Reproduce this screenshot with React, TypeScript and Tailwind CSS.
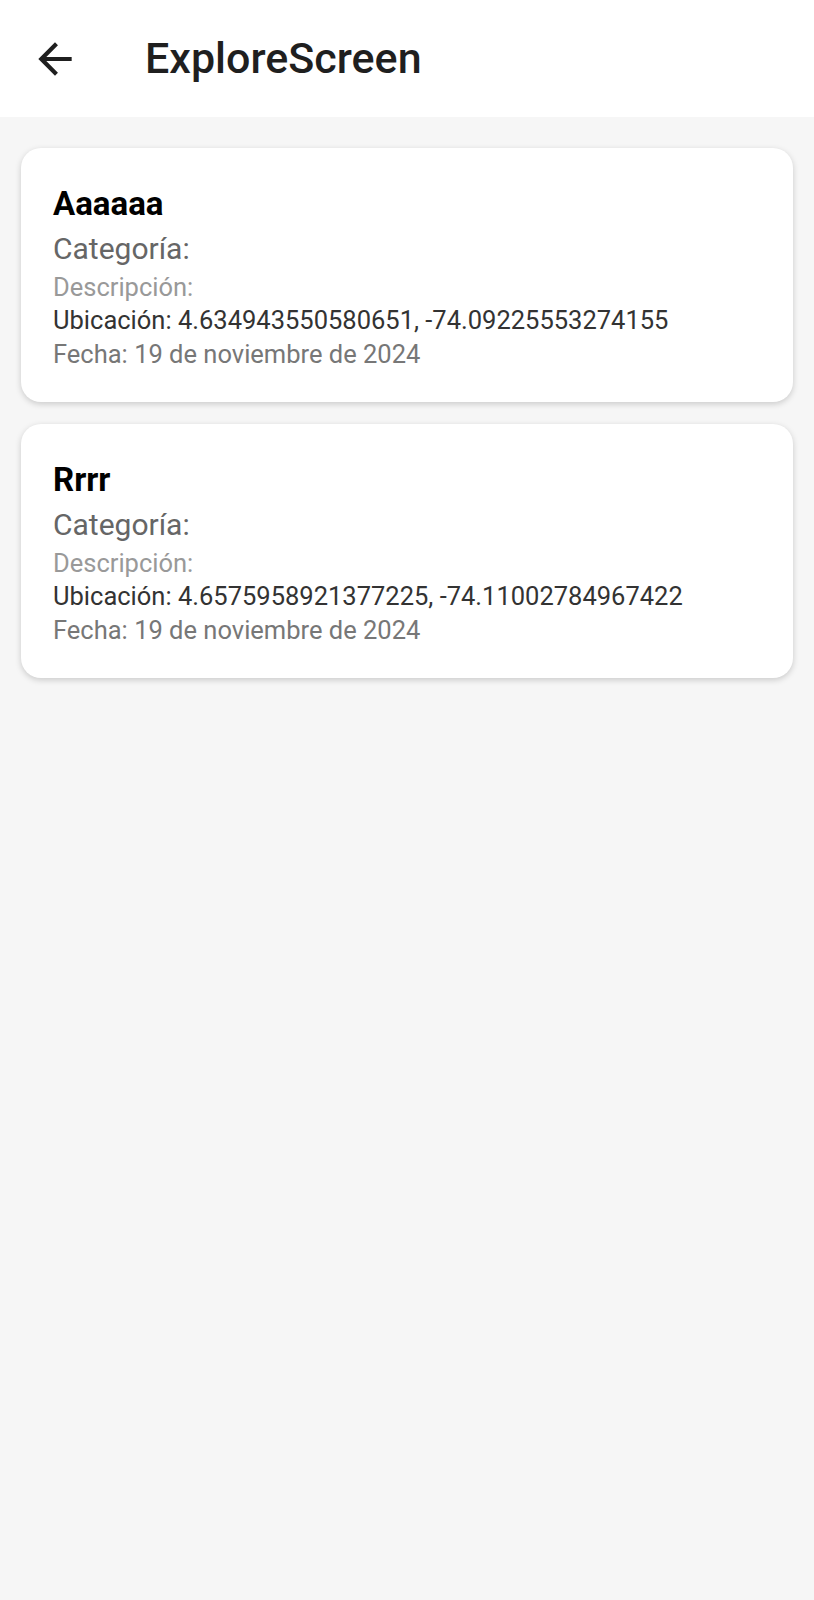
type Place = {
  name: string;
  location: string;
  date: string;
};

const places: Place[] = [
  {
    name: "Aaaaaa",
    location: "4.634943550580651, -74.09225553274155",
    date: "19 de noviembre de 2024",
  },
  {
    name: "Rrrr",
    location: "4.6575958921377225, -74.11002784967422",
    date: "19 de noviembre de 2024",
  },
];

function BackArrow() {
  return (
    <svg viewBox="0 0 24 24" className="w-[50px] h-[50px]" fill="currentColor">
      <path d="M20 11H7.83l5.59-5.59L12 4l-8 8 8 8 1.41-1.41L7.83 13H20v-2z" />
    </svg>
  );
}

function PlaceCard({ place }: { place: Place }) {
  return (
    <div className="bg-white rounded-[20px] shadow-[0_2px_6px_rgba(0,0,0,0.18)] px-8 pt-[34px] pb-[31px]">
      <h2 className="text-[33px] leading-[44px] font-bold text-black">
        {place.name}
      </h2>
      <p className="text-[30px] leading-[45px] text-[#666666]">Categoría:</p>
      <p className="text-[25.5px] leading-[32px] text-[#999999]">Descripción:</p>
      <p className="text-[25.5px] leading-[34px] text-[#333333]">
        Ubicación: {place.location}
      </p>
      <p className="text-[25.5px] leading-[34px] text-[#777777]">
        Fecha: {place.date}
      </p>
    </div>
  );
}

export default function App() {
  return (
    <div
      className="min-h-[1600px] w-[814px] bg-[#f6f6f6]"
      style={{ fontFamily: "Roboto, 'Noto Sans', sans-serif" }}
    >
      <header className="h-[117px] bg-white flex items-center">
        <button className="ml-[30px] flex items-center justify-center text-[#1f1f1f]">
          <BackArrow />
        </button>
        <h1 className="ml-[65px] text-[43px] font-medium text-[#1f1f1f]">
          ExploreScreen
        </h1>
      </header>

      <main className="px-[21px] pt-[31px] flex flex-col gap-[22px]">
        {places.map((place) => (
          <PlaceCard key={place.name} place={place} />
        ))}
      </main>
    </div>
  );
}
